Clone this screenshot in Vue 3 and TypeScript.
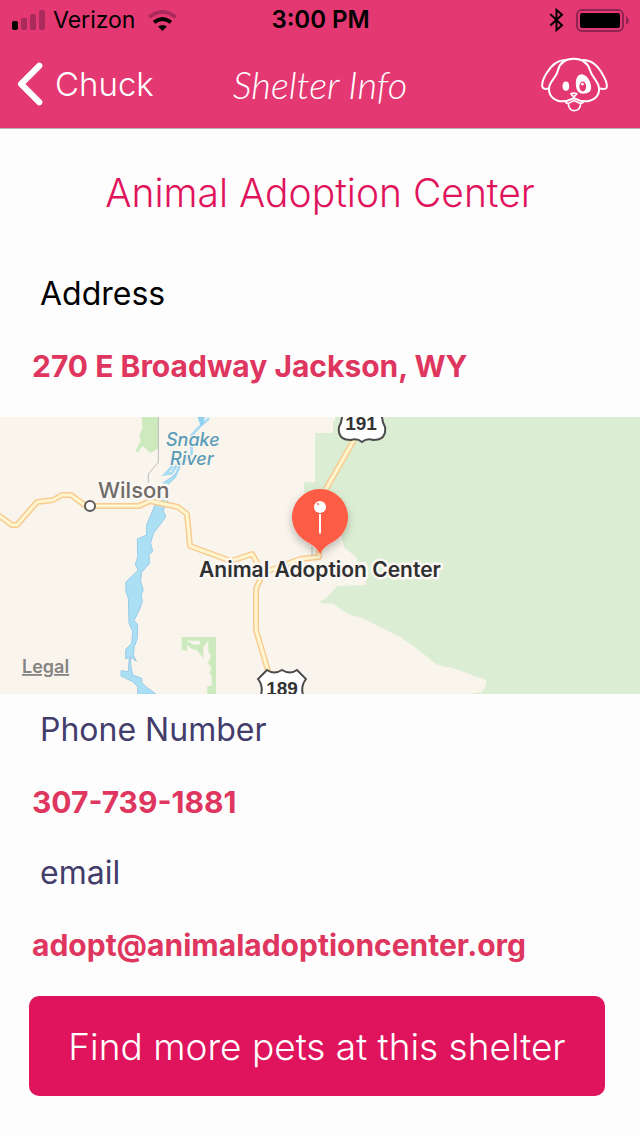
<script setup lang="ts">
interface Section {
  id: string
  label: string
  value: string
  href: string
}

const shelter = 'Animal Adoption Center'

const address: Section = {
  id: 'address',
  label: 'Address',
  value: '270 E Broadway Jackson, WY',
  href: '#address',
}

const contacts: Section[] = [
  { id: 'phone', label: 'Phone Number', value: '307-739-1881', href: 'tel:307-739-1881' },
  { id: 'email', label: 'email', value: 'adopt@animaladoptioncenter.org', href: 'mailto:adopt@animaladoptioncenter.org' },
]
</script>

<template>
  <div class="screen">
    <header class="top">
      <div class="status">
        <div class="carrier">
          <svg class="signal" viewBox="0 0 33 20" aria-hidden="true">
            <rect x="0" y="11" width="6" height="9" rx="2" fill="#000" />
            <g fill="#a92a5b">
              <rect x="9" y="8" width="6" height="12" rx="2" />
              <rect x="18" y="4" width="6" height="16" rx="2" />
              <rect x="27" y="0" width="6" height="20" rx="2" />
            </g>
          </svg>
          <span>Verizon</span>
          <svg class="wifi" viewBox="446 28 86 62" aria-hidden="true">
            <path d="M450 49Q489 18 528 49" fill="none" stroke="#a92a5b" stroke-width="11" />
            <path d="M464 64Q489 45 514 64" fill="none" stroke="#000" stroke-width="11" />
            <path d="M476 77Q489 67 502 77L489 90Z" />
          </svg>
        </div>
        <time class="clock">3:00 PM</time>
        <div class="power">
          <svg class="bluetooth" viewBox="88 24 46 72" aria-hidden="true">
            <path d="M92 42L128 76L111 91V29L128 44L92 77" fill="none" stroke="#000" stroke-width="6" />
          </svg>
          <svg class="battery" viewBox="0 0 53 23" aria-hidden="true">
            <rect x="1" y="1" width="46" height="21" rx="5" fill="none" stroke="#8e2450" stroke-width="2" />
            <rect x="4" y="4" width="40" height="15" rx="2" />
            <path d="M50 7Q56 11.500 50 16Z" fill="#8e2450" />
          </svg>
        </div>
      </div>
      <nav class="bar">
        <button class="back" type="button">
          <svg class="chevron" viewBox="52 187 75 130" aria-hidden="true">
            <path d="M117 198L63 252L117 306" fill="none" stroke="#fff" stroke-width="18" stroke-linecap="round" stroke-linejoin="round" />
          </svg>
          <span>Chuck</span>
        </button>
        <h1 class="title">Shelter Info</h1>
        <button class="dog" type="button" aria-label="Pets">
          <svg viewBox="64 165 202 166" aria-hidden="true">
            <g fill="none" stroke="#fff" stroke-width="6" stroke-linejoin="round" stroke-linecap="round">
              <path d="M163 170C135 170 120 185 115 205C112 222 98 232 90 250C84 270 92 290 115 297C130 301 146 298 163 289C180 298 196 301 211 297C236 290 243 270 237 250C230 232 216 222 212 205C206 185 190 170 163 170Z" />
              <path d="M137 174C115 174 95 190 80 215C70 232 66 245 68 255C70 262 80 262 88 260" />
              <path d="M191 174C213 174 235 190 250 218C260 235 264 250 262 257C260 263 250 262 240 260" />
              <path d="M154 276Q163 272 172 276L163 286Z" stroke-width="5" />
              <path d="M137 299Q140 306 147 305V311Q151 327 164 327Q179 327 183 311V305Q190 305 192 299M147 305L163 296L183 305" stroke-width="5" />
            </g>
            <ellipse cx="139" cy="253" rx="10" ry="14" fill="#fff" />
            <path d="M188 217C205 220 215 240 215 258C215 270 205 276 192 276C175 276 169 262 169 245C169 228 176 216 188 217Z" fill="#fff" />
            <ellipse cx="190" cy="254" rx="10" ry="15" fill="#e43873" />
            <ellipse cx="189" cy="247" rx="4" ry="4" fill="#fff" />
          </svg>
        </button>
      </nav>
    </header>

    <main>
      <h2 class="name">{{ shelter }}</h2>

      <section class="info">
        <h3 class="label dark">{{ address.label }}</h3>
        <a class="value" :href="address.href">{{ address.value }}</a>
      </section>

      <svg class="map" viewBox="0 417 640 277" preserveAspectRatio="xMidYMid slice" role="img" aria-label="Map of the shelter">
        <defs>
          <filter id="shade" x="-30%" y="-30%" width="160%" height="160%">
            <feDropShadow dx="0" dy="4" stdDeviation="4" flood-color="#000" flood-opacity=".25" />
          </filter>
        </defs>
        <rect x="-800" y="417" width="2240" height="277" fill="#f9f5ed" />
        <path d="M335 417V421H333V433H315V482H304V492L330 520L342 537L344 547L357 558V562H366V585L337 586L330 594Q326 599 318 602Q326 604 333 604Q344 612 353 616L360 617L400 637Q420 650 433 662Q440 667 450 667L480 678Q486 679 486 681V685L482 692L470 694H1440V417Z" fill="#dbeed3" />
        <g transform="translate(0 410) scale(.33333)">
          <path d="M425 20H475V115L452 129L427 108L412 129L407 122L422 92L418 77L427 55ZM545 681H648V852H622V828H635V798L628 790L635 775L624 758L633 738L625 722V693L610 711V745L590 720L575 717L562 704V722L545 720Z" fill="#cdeabf" />
          <path d="M560 692L598 692L602 703L580 704Z" fill="#f9f5ed" />
          <path d="M475 20V157L445 192V218" fill="none" stroke="#bbb" stroke-width="3" />
          <path d="M627 25L602 47L575 75V130L540 165L525 200L500 220M518 168L495 193L515 190L530 165" fill="none" stroke="#a5dcf3" stroke-width="8" />
          <path d="M592 20H614L610 43L602 47Z" fill="#8fcfef" />
          <path d="M527 192L520 208L503 225L505 270L490 300L497 320L487 335L460 370L452 400L458 423L447 435L449 460L425 487L422 515L430 540L423 555L427 575L418 600L402 632L413 643L412 685L403 710L400 735L409 754L391 741L393 770L398 795L425 805L426 818L440 832L468 852H413V830L398 815L363 798V782L385 785L388 740L377 747V718L395 700L398 665L387 640L385 565L378 545L377 517L415 480L406 465L413 440L412 387L440 375V345L465 285L480 245L488 220L510 205Z" fill="#aadff4" stroke="#9bcbea" stroke-width="3" />
        </g>
        <g fill="none" stroke-linejoin="round">
          <g stroke="#f8cb91" stroke-width="6">
            <path d="M-2 515L12 525H17L37 502L53 500L62 495H71L86 506H139L150 501L178 507L187 514L190 546L231 561L252 554L259 566L263 573L256 589V630L269 674" />
            <path d="M263 573L300 559L319 557V550M354 440L326 489" />
          </g>
          <g stroke="#fff5ce" stroke-width="3">
            <path d="M-2 515L12 525H17L37 502L53 500L62 495H71L86 506H139L150 501L178 507L187 514L190 546L231 561L252 554L259 566L263 573L256 589V630L269 674" />
            <path d="M263 573L300 559L319 557V550M354 440L326 489" />
          </g>
        </g>
        <path d="M312 547V556" stroke="#bbb" />
        <circle cx="90" cy="506" r="5" fill="#fff" stroke="#5f5a57" stroke-width="2" />
        <text class="halo" x="98" y="498" font-size="22" font-weight="500" fill="#706b69">Wilson</text>
        <g class="water" font-size="18" font-weight="500" font-style="italic" fill="#5a9cb8">
          <text x="166" y="446">Snake</text>
          <text x="170" y="465">River</text>
        </g>
        <g fill="#fff" stroke="#4b4b4b" stroke-width="2">
          <path d="M342 410Q343 420 339 427Q337 440 351 440Q357 438 362 442Q367 438 373 440Q387 440 385 427Q381 420 382 410Z" />
          <path d="M267 670Q274 675 282 670Q290 675 297 670L306 679Q299 688 305 700H259Q265 688 258 679Z" />
        </g>
        <g class="route" text-anchor="middle" font-size="19" font-weight="700" fill="#333">
          <text x="361" y="430">191</text>
          <text x="282" y="695">189</text>
        </g>
        <path d="M320 554C316 546 310 544 304 540A28 28 0 1 1 336 540C330 544 324 546 320 554Z" fill="#ff5b45" filter="url(#shade)" />
        <circle cx="320" cy="507" r="6" fill="#fff" />
        <circle cx="318" cy="504" r="1" fill="#ff5b45" />
        <path d="M319 514H321V532L320 535L319 532Z" fill="#fff" />
        <text class="halo" x="320" y="577" text-anchor="middle" font-size="21" font-weight="600" fill="#2f2f31">{{ shelter }}</text>
        <a href="#legal"><text x="22" y="673" font-size="18" font-weight="600" fill="#858483" text-decoration="underline">Legal</text></a>
      </svg>

      <section v-for="item in contacts" :key="item.id" class="info">
        <h3 class="label">{{ item.label }}</h3>
        <a class="value" :href="item.href">{{ item.value }}</a>
      </section>

      <div class="action">
        <button class="more" type="button">Find more pets at this shelter</button>
      </div>
    </main>
  </div>
</template>

<style>
body {
  background: #fdfdfd;
}
</style>

<style scoped>
.screen {
  min-height: 100vh;
  font-family: Inter, "Liberation Sans", sans-serif;
  color: #000;
}
.top {
  background: #e43873;
  border-bottom: 1px solid #bdb3b7;
}
.status {
  display: grid;
  grid-template-columns: 1fr auto 1fr;
  align-items: center;
  height: 40px;
  padding: 0 11px 0 12px;
  font-size: 23px;
  line-height: 40px;
}
.carrier,
.power {
  display: flex;
  align-items: center;
  gap: 8px;
}
.power {
  justify-content: flex-end;
  gap: 12px;
}
.signal {
  width: 33px;
  height: 20px;
}
.wifi {
  width: 29px;
  height: 21px;
  margin-left: 5px;
}
.clock {
  font-size: 24px;
  font-weight: 600;
}
.bluetooth {
  width: 15px;
  height: 24px;
}
.battery {
  width: 53px;
  height: 23px;
}
.bar {
  display: grid;
  grid-template-columns: 1fr auto 1fr;
  align-items: center;
  height: 88px;
  padding: 0 17px;
}
.back,
.dog {
  padding: 0;
  border: 0;
  background: none;
  color: #fff;
  font-family: inherit;
}
.back {
  display: flex;
  align-items: center;
  gap: 12px;
  font-size: 33px;
  font-weight: 300;
  line-height: 40px;
}
.chevron {
  width: 26px;
  height: 44px;
}
.title {
  margin: 0;
  color: #fff;
  font-family: Lato, sans-serif;
  font-size: 38px;
  font-style: italic;
  font-weight: 300;
  line-height: 40px;
}
.dog {
  display: flex;
  justify-self: end;
  margin-right: 15px;
}
.dog svg {
  width: 67px;
  height: 55px;
}
.name {
  margin: 0;
  padding: 40px 16px 41px;
  color: #e0145c;
  font-size: 39px;
  font-weight: 300;
  line-height: 48px;
  text-align: center;
}
.info {
  display: flex;
  flex-direction: column;
  align-items: flex-start;
  padding: 16px 32px 15px;
}
.label {
  margin: 0;
  padding-left: 8px;
  color: #433d6b;
  font-size: 32px;
  font-weight: 400;
  line-height: 40px;
}
.label.dark {
  color: #000;
}
.value {
  margin-top: 32px;
  color: #df3660;
  font-size: 30px;
  font-weight: 700;
  line-height: 40px;
  text-decoration: none;
}
.map {
  display: block;
  width: 100%;
  height: 277px;
  margin-top: 16px;
}
.map text {
  font-family: Inter, "Liberation Sans", sans-serif;
}
.map .route text {
  font-family: "Liberation Sans", sans-serif;
}
.map .halo {
  paint-order: stroke;
  stroke: #fbf8f3;
  stroke-width: 5px;
  stroke-linejoin: round;
}
.map .water {
  paint-order: stroke;
  stroke: #f9f5ed;
  stroke-width: 2px;
}
.action {
  padding: 16px 35px 40px 29px;
}
.more {
  width: 100%;
  height: 100px;
  border: 0;
  border-radius: 10px;
  background: #e0145c;
  color: #fff;
  font-family: inherit;
  font-size: 37px;
  font-weight: 300;
}
</style>
